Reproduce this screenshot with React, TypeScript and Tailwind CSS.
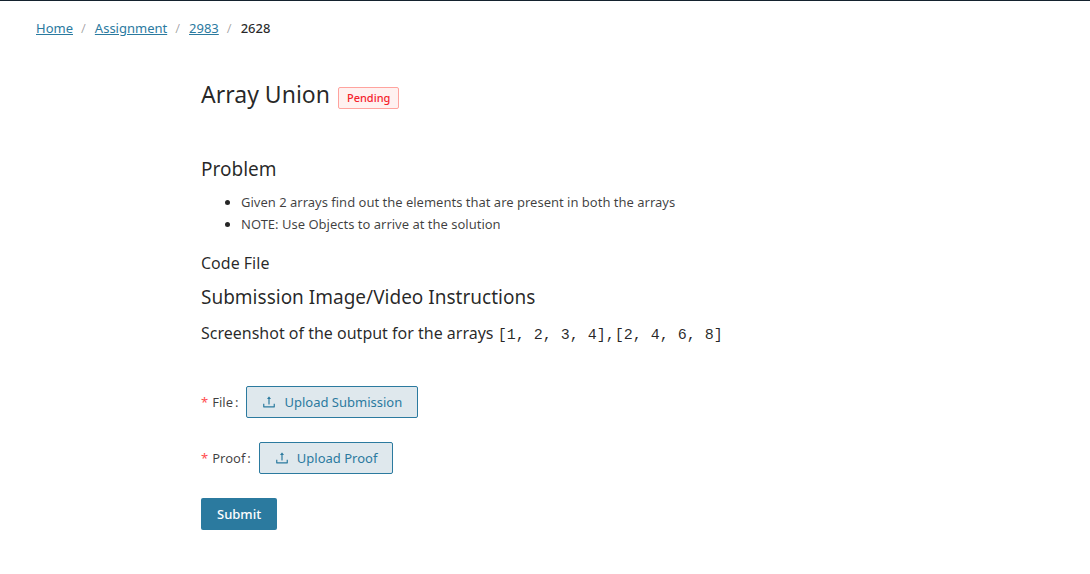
import type { ReactNode } from "react";

function Crumb({ href, children }: { href: string; children: ReactNode }) {
  return (
    <li className="flex">
      <a href={href} className="text-[#2b7a9f] underline">{children}</a>
      <span className="mr-[9px] ml-2 text-black/35" aria-hidden="true">/</span>
    </li>
  );
}

function UploadIcon() {
  return (
    <svg viewBox="64 64 896 896" className="size-3.5" fill="currentColor" aria-hidden="true">
      <path d="M400 317.700h73.900V656c0 4.400 3.600 8 8 8h60c4.400 0 8-3.600 8-8V317.700H624c6.700 0 10.400-7.700 6.300-12.900L518.300 163a8 8 0 0 0-12.600 0l-112 141.700c-4.100 5.300-.4 13 6.300 13zM878 626h-60c-4.400 0-8 3.600-8 8v154H214V634c0-4.400-3.600-8-8-8h-60c-4.400 0-8 3.600-8 8v198c0 17.700 14.300 32 32 32h684c17.700 0 32-14.300 32-32V634c0-4.400-3.600-8-8-8z" />
    </svg>
  );
}

function UploadField({ label, id, action }: { label: string; id: string; action: string }) {
  return (
    <div className="mb-6 flex items-center gap-2">
      <label htmlFor={id} className="flex">
        <span className="mr-1 text-[#ff4d4f]">*</span>
        {label}
        <span className="ml-0.5">:</span>
      </label>
      <button
        id={id}
        type="button"
        className="flex h-8 items-center gap-2 rounded-xs border border-[#2b7a9f] bg-[#dfe8ed] px-[15px] text-[#2b7a9f]"
      >
        <UploadIcon />
        {action}
      </button>
    </div>
  );
}

export default function App() {
  return (
    <div className="border-t border-[#14222e] bg-white font-['Noto_Sans',sans-serif] text-[13px] leading-[22px] text-black/75">
      <nav aria-label="Breadcrumb" className="px-9 pt-4">
        <ol className="flex">
          <Crumb href="#home">Home</Crumb>
          <Crumb href="#assignment">Assignment</Crumb>
          <Crumb href="#2983">2983</Crumb>
          <li aria-current="page" className="font-medium text-black/85">2628</li>
        </ol>
      </nav>
      <main className="px-[201px] pt-[38px]">
        <div className="flex items-end gap-2 text-black/85">
          <h1 className="text-[23px] leading-[34px]">Array Union</h1>
          <span className="mb-0.5 rounded-xs border border-[#ffa39e] bg-[#fff1f0] px-2 text-[11px] leading-5 font-medium text-[#f5222d]">Pending</span>
        </div>
        <h2 className="mt-11 text-[19px] leading-7 text-black/85">Problem</h2>
        <ul className="mt-2 list-disc pl-10 marker:text-black/85">
          <li>Given 2 arrays find out the elements that are present in both the arrays</li>
          <li>NOTE: Use Objects to arrive at the solution</li>
        </ul>
        <h3 className="mt-4 text-[16px] leading-6 text-black/85">Code File</h3>
        <h2 className="mt-2 text-[19px] leading-7 text-black/85">Submission Image/Video Instructions</h2>
        <h3 className="mt-2.5 text-[16px] leading-6 text-black/85">
          Screenshot of the output for the arrays{" "}
          <code className="font-['Liberation_Mono',monospace] text-[15px]">[1, 2, 3, 4],[2, 4, 6, 8]</code>
        </h3>
        <form className="mt-[38px]" onSubmit={(e) => e.preventDefault()}>
          <UploadField label="File" id="file" action="Upload Submission" />
          <UploadField label="Proof" id="proof" action="Upload Proof" />
          <button type="submit" className="h-8 rounded-xs bg-[#2b7a9f] px-4 font-medium text-white">Submit</button>
        </form>
      </main>
    </div>
  );
}
